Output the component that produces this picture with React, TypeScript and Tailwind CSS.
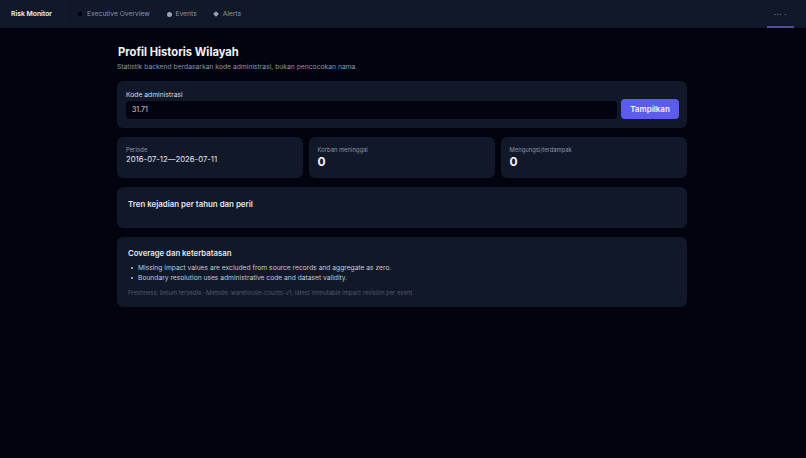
const STATS = [
  { label: "Korban meninggal", value: "0" },
  { label: "Mengungsi/terdampak", value: "0" },
];

const NOTES = [
  "Missing impact values are excluded from source records and aggregate as zero.",
  "Boundary resolution uses administrative code and dataset validity.",
];

export default function App() {
  return (
    <div className="min-h-[458px] bg-[#02030f] font-['Inter',sans-serif] text-[#f1f5f9]">
      <header className="flex h-[28px] items-center border-b border-[#0d1322] bg-[#111829]">
        <div className="flex h-full w-[66px] items-center border-r border-[#151c2e] pt-[1px] pl-[11px] text-[6.8px] font-semibold whitespace-nowrap">
          Risk Monitor
        </div>
        <nav className="mt-[1px] ml-[12px] flex items-center gap-[17px] text-[6.75px] text-[#8b95a7]">
          <span className="flex items-center gap-[5px]">
            <span className="h-[4px] w-[4px] bg-[#02030f]" />
            Executive Overview
          </span>
          <span className="flex items-center gap-[3.5px]">
            <span className="h-[5px] w-[5px] rounded-full bg-[#9aa5b6]" />
            Events
          </span>
          <span className="flex items-center gap-[5px]">
            <span className="h-[4px] w-[4px] rotate-45 bg-[#9aa5b6]" />
            Alerts
          </span>
        </nav>
        <div className="mr-[12px] ml-auto flex h-full w-[27px] flex-col items-center justify-end">
          <span className="mb-[8px] text-[7px] leading-none tracking-[0.5px] text-[#9aa5b6]">··· ·</span>
          <span className="-mb-[1px] h-[2px] w-full bg-[#4a4f9e]" />
        </div>
      </header>

      <main className="ml-[117px] flex w-[570px] flex-col pt-[16px]">
        <h1 className="pt-[1px] pl-[1px] text-[11.2px] leading-[15px] font-bold">Profil Historis Wilayah</h1>
        <p className="mt-[2px] text-[6.75px] leading-[10px] text-[#8b95a7]">
          Statistik backend berdasarkan kode administrasi, bukan pencocokan nama.
        </p>

        <section className="mt-[9px] h-[47px] rounded-[6px] bg-[#111829] pt-[9px] pr-[8px] pl-[9px]">
          <label className="block text-[6.75px] leading-[9px] text-[#d5dbe5]">Kode administrasi</label>
          <div className="flex items-start gap-[4px]">
            <div className="mt-[2px] flex h-[18px] flex-1 items-center rounded-[4px] bg-[#02030f] pt-[1px] pl-[6px] text-[7px] text-[#d5dbe5]">
              31.71
            </div>
            <button className="h-[20px] w-[58px] rounded-[4px] bg-[#5b5bf0] text-[8px] font-semibold text-[#f1f5f9]">
              Tampilkan
            </button>
          </div>
        </section>

        <section className="mt-[9px] grid grid-cols-3 gap-[6px]">
          <div className="h-[41px] rounded-[6px] bg-[#111829] pt-[9px] pl-[9px]">
            <p className="text-[5.85px] leading-[7px] text-[#8b95a7]">Periode</p>
            <p className="mt-[1px] text-[7.75px] leading-[11px] text-[#e2e8f0]">2016-07-12—2026-07-11</p>
          </div>
          {STATS.map((stat) => (
            <div key={stat.label} className="h-[41px] rounded-[6px] bg-[#111829] pt-[9px] pl-[8.5px]">
              <p className="text-[5.85px] leading-[7px] text-[#8b95a7]">{stat.label}</p>
              <p className="mt-[1px] text-[12px] leading-[15px] font-bold">{stat.value}</p>
            </div>
          ))}
        </section>

        <section className="mt-[9px] h-[41px] rounded-[6px] bg-[#111829] pt-[11px] pl-[11px]">
          <h2 className="text-[7.9px] leading-[12px] font-semibold text-[#e2e8f0]">Tren kejadian per tahun dan peril</h2>
        </section>

        <section className="mt-[9px] h-[70px] rounded-[6px] bg-[#111829] pt-[11px] pl-[11px]">
          <h2 className="text-[7.75px] leading-[11px] font-semibold text-[#e2e8f0]">Coverage dan keterbatasan</h2>
          <ul className="mt-[4px] pl-[3px] text-[6.7px] leading-[10px] text-[#c2cad6]">
            {NOTES.map((note) => (
              <li key={note} className="flex items-center gap-[5px]">
                <span className="h-[2px] w-[2px] rounded-full bg-[#c2cad6]" />
                {note}
              </li>
            ))}
          </ul>
          <p className="mt-[6px] text-[5.9px] leading-[8px] text-[#4f5868]">
            Freshness: belum tersedia · Metode: warehouse-counts-v1; latest immutable impact revision per event
          </p>
        </section>
      </main>
    </div>
  );
}
